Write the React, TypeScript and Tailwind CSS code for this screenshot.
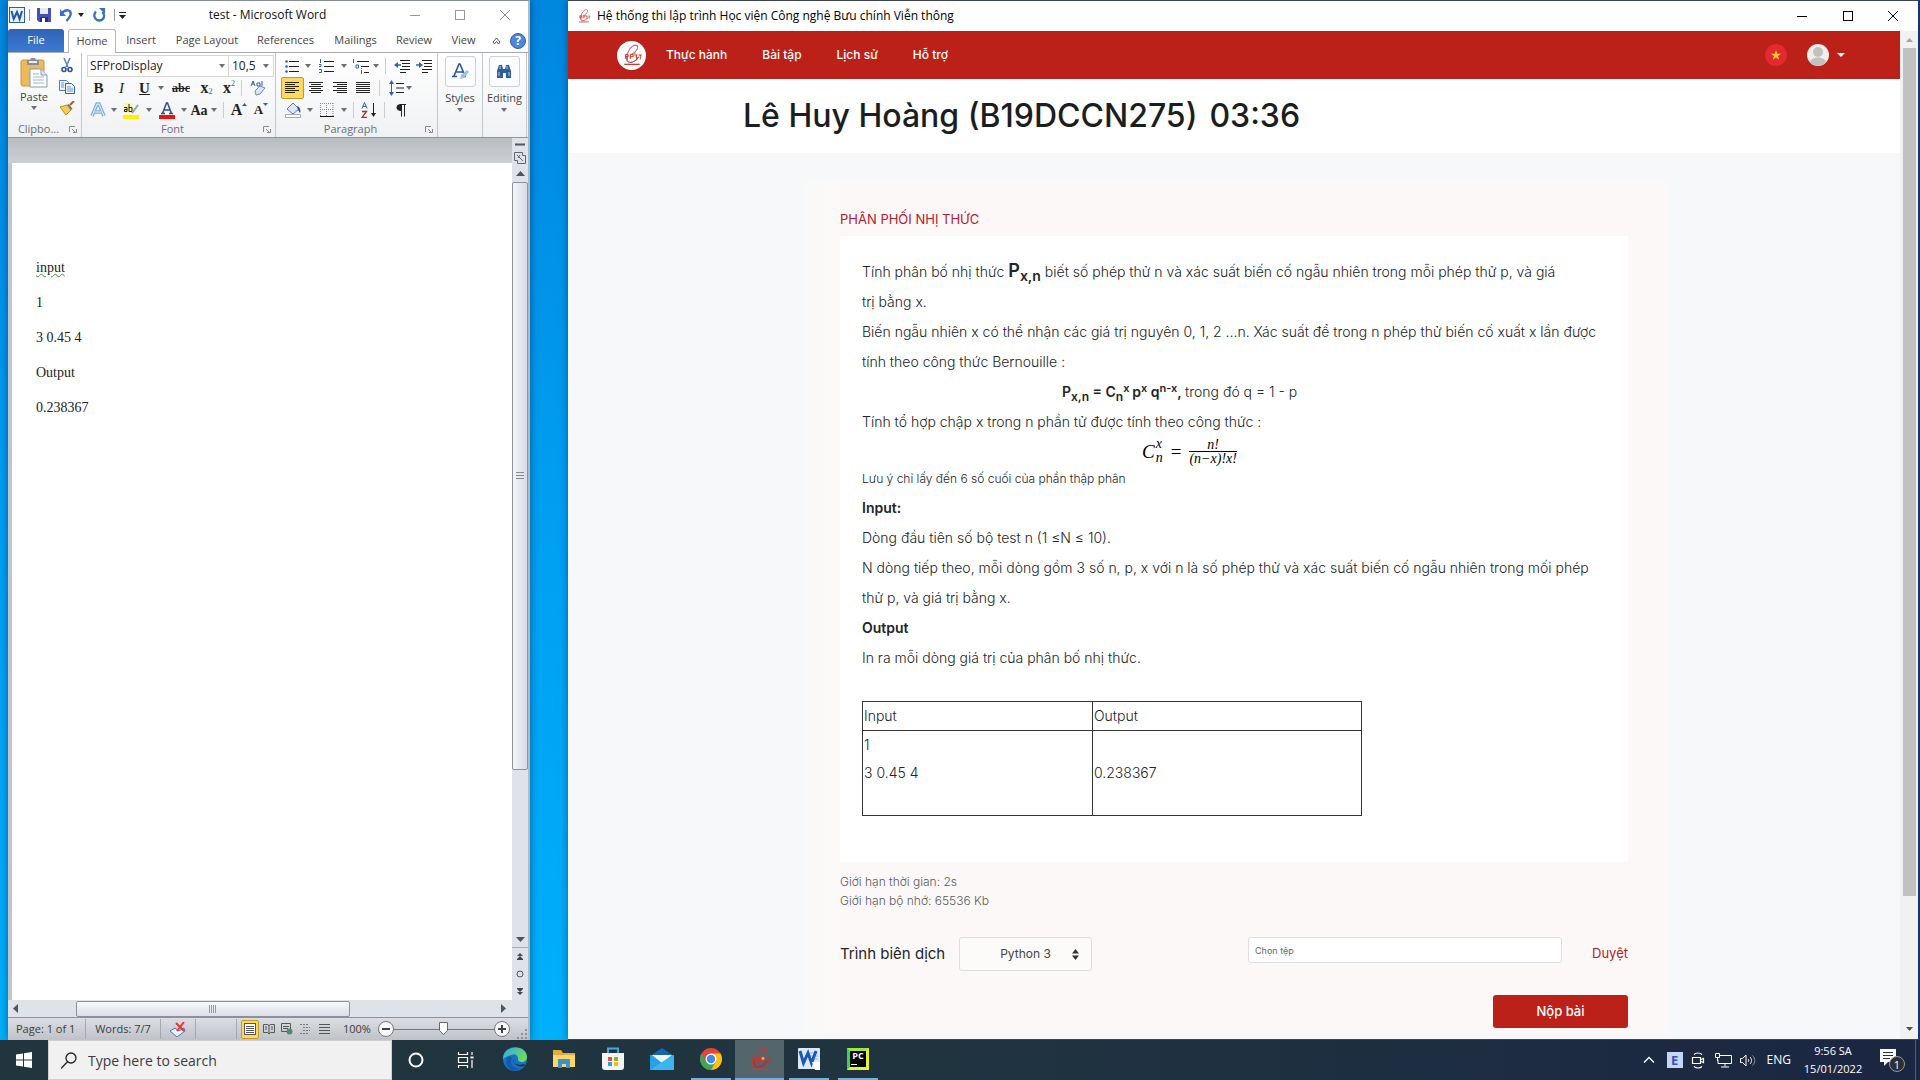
import React from "react";

type Kids = { children?: React.ReactNode };

function Svg({ w, h, children, className = "" }: { w: number; h: number; className?: string } & Kids) {
  return (
    <svg width={w} height={h} viewBox={`0 0 ${w} ${h}`} fill="none" className={`block shrink-0 ${className}`} aria-hidden="true">
      {children}
    </svg>
  );
}

function Caret({ className = "w-[10px]" }: { className?: string }) {
  return (
    <span className={`flex shrink-0 items-center justify-center ${className}`}>
      <Svg w={6} h={4}><path d="M0 0h6L3 4z" fill="#6b6f76" /></Svg>
    </span>
  );
}

function Tool({ label, w, children }: { label: string; w: string } & Kids) {
  return (
    <button aria-label={label} className={`flex h-[22px] shrink-0 items-center justify-center ${w}`}>
      {children}
    </button>
  );
}

function Sep({ className = "" }: { className?: string }) {
  return <span className={`h-[16px] w-px shrink-0 bg-[#c9ccd1] ${className}`} />;
}

function Lines({ xs, sel = false }: { xs: [number, number][]; sel?: boolean }) {
  return (
    <Svg w={15} h={13}>
      {xs.map(([a, b], i) => (
        <path key={i} d={`M${a} ${i * 2 + 0.5}H${b}`} stroke={sel ? "#2b2300" : "#222"} />
      ))}
    </Svg>
  );
}

function Logo({ size, light = false }: { size: number; light?: boolean }) {
  return (
    <svg width={size} height={size} viewBox="0 0 20 20" fill="none" aria-hidden="true" className="block shrink-0">
      <path d="M6 15C4 9 9 1 13.500 1c3.500.5 1 6-4 8.500" stroke={light ? "#b4777a" : "#c9383a"} strokeWidth="1" />
      <path d="M6 11c-2 4 0 6.500 4 5.500 3-1 5-3 6-5" stroke={light ? "#8e5a6e" : "#c22526"} strokeWidth="1" />
      <path d="M4 9.500v4M4 9.500h2.500v2H4M8.500 9.500v4M8.500 9.500H11v2H8.500M13 10h2M14 10v4M16 10h3M17.500 10v4" stroke="#d0302a" strokeWidth=".9" />
      <circle cx="12.500" cy="9.500" r="1.300" fill="#e8a33a" />
      <path d="M3 18.500h14" stroke="#cc3a38" strokeWidth="1.200" />
    </svg>
  );
}

function WordMark({ size }: { size: number }) {
  return (
    <svg width={size} height={size} viewBox="0 0 16 16" aria-hidden="true" className="block shrink-0">
      <rect x=".5" y=".5" width="15" height="15" fill="#e8f1fb" stroke="#2c5ea8" />
      <path d="M2.500 4l2.200 8L8 5l2.600 7L13 4" fill="none" stroke="#1f56a8" strokeWidth="2" />
    </svg>
  );
}

function TitleBar() {
  return (
    <div className="flex h-[28px] shrink-0 items-center">
      <div className="flex w-[135px] items-center pl-px">
        <WordMark size={16} />
        <span className="ml-1 h-3 w-px bg-[#9a9a9a]" />
        <button aria-label="Save" className="ml-[7px]">
          <Svg w={14} h={14}>
            <path d="M0 0h14v14H2l-2-2z" fill="#4a4fb8" />
            <path d="M3 0h8v6H3z" fill="#e6ebf8" /><path d="M3 9h8v5H3z" fill="#2b2f7c" /><path d="M5 10h3v4H5z" fill="#fff" />
          </Svg>
        </button>
        <button aria-label="Undo" className="ml-[9px]">
          <Svg w={13} h={14}><path d="M1.500 5.500C6 0 12 2 10.500 7c-.7 2.400-2 4-4 6" stroke="#3a6fc4" strokeWidth="2.400" /><path d="M0 1v7h6z" fill="#3a6fc4" /></Svg>
        </button>
        <span className="ml-[5px]"><Svg w={7} h={4}><path d="M0 0h6L3 4z" fill="#222" /></Svg></span>
        <button aria-label="Redo" className="ml-2">
          <Svg w={13} h={14}><path d="M3 3.500C-1 8 3 12.500 6.500 12.500S13 8 9.500 4" stroke="#3a6fc4" strokeWidth="2.300" /><path d="M6 0h6v6z" fill="#3a6fc4" /></Svg>
        </button>
        <span className="ml-2 h-3 w-px shrink-0 bg-[#9a9a9a]" />
        <button aria-label="Customize" className="ml-1"><Svg w={7} h={7}><path d="M0 .5h7" stroke="#222" /><path d="M0 3h7L3.500 7z" fill="#222" /></Svg></button>
      </div>
      <h1 className="flex-1 text-center text-[12px] text-[#111]">test - Microsoft Word</h1>
      <button aria-label="Minimize" className="flex w-[45px] justify-center"><Svg w={10} h={10}><path d="M0 5.500h10" stroke="#999" /></Svg></button>
      <button aria-label="Maximize" className="flex w-[45px] justify-center"><Svg w={10} h={10}><rect x=".5" y=".5" width="9" height="9" stroke="#999" /></Svg></button>
      <button aria-label="Close" className="flex w-[46px] justify-center"><Svg w={10} h={10}><path d="M0 0l10 10M10 0L0 10" stroke="#888" /></Svg></button>
    </div>
  );
}

function Tabs() {
  const tabs: [string, string][] = [
    ["Insert", "w-[50px]"], ["Page Layout", "w-[82px]"], ["References", "w-[75px]"],
    ["Mailings", "w-[65px]"], ["Review", "w-[52px]"], ["View", "w-[47px]"],
  ];
  return (
    <nav className="flex h-6 shrink-0 items-end border-b border-[#a9adb3] text-[11px] text-[#444]">
      <button className="h-[23px] w-14 shrink-0 rounded-t-[3px] bg-gradient-to-b from-[#2f62b5] to-[#3b7bd4] text-white">File</button>
      <button className="-mb-px ml-1 h-[24px] w-12 shrink-0 rounded-t-[3px] border border-b-0 border-[#b4b7bc] bg-white">Home</button>
      {tabs.map(([t, w]) => <button key={t} className={`h-[23px] shrink-0 whitespace-nowrap ${w}`}>{t}</button>)}
      <div className="flex h-[23px] flex-1 items-center justify-end gap-[9px] pr-[2px]">
        <button aria-label="Minimize the ribbon"><Svg w={9} h={8}><path d="M1 5l3.500-4L8 5l-1.500 2-2-2.500L2.500 7z" stroke="#555" /></Svg></button>
        <button aria-label="Help" className="flex h-4 w-4 items-center justify-center rounded-full border border-[#2f5fae] bg-[#4b86dc] text-[12px] font-bold leading-none text-white">?</button>
      </div>
    </nav>
  );
}

function GroupLabel({ text, launch = true }: { text: string; launch?: boolean }) {
  return (
    <div className="mt-auto flex h-4 items-center text-[11px] text-[#6a6f78]">
      <span className="flex-1 text-center">{text}</span>
      {launch && (
        <button aria-label={`${text} options`} className="w-[12px]">
          <Svg w={8} h={7}><path d="M.5 6V.5H6M3 3l4 4M7.500 3v3.500H4" stroke="#888" /></Svg>
        </button>
      )}
    </div>
  );
}

function BigGroup({ text, w, icon }: { text: string; w: string; icon: React.ReactNode }) {
  return (
    <section className={`flex shrink-0 flex-col items-center border-r border-[#c3c6cb] pt-[3px] text-[11px] text-[#444] ${w}`}>
      <button className="flex flex-col items-center">
        <span className="flex h-[31px] w-[31px] items-center justify-center rounded-[3px] border border-[#cdd0d6] bg-[#fbfcfd]">{icon}</span>
        <span className="mt-[3px] leading-4">{text}</span>
        <span className="mt-[2px]"><Caret /></span>
      </button>
    </section>
  );
}

function Ribbon() {
  const serif = "font-['Liberation_Serif',serif]";
  return (
    <div className="flex h-[85px] shrink-0 border-b border-[#8f949c] bg-gradient-to-b from-white to-[#f0f1f3]">
      <section className="flex w-[74px] shrink-0 flex-col border-r border-[#c3c6cb]">
        <div className="flex pt-[5px]">
          <button className="flex w-[52px] flex-col items-center text-[11px] text-[#444]">
            <Svg w={28} h={30}>
              <rect x="1" y="2" width="23" height="26" rx="2" fill="#ecb95c" stroke="#c9943a" />
              <path d="M7 2h3l1-2h4l1 2h3v5H7z" fill="#8a8d92" /><path d="M9 3h8v2H9z" fill="#e9eaec" />
              <path d="M10 11h11l6 6v12H10z" fill="#fff" stroke="#8699b8" /><path d="M21 11v6h6" fill="#dfe8f4" stroke="#8699b8" />
              <path d="M13 16h6M13 19h11M13 22h11M13 25h11" stroke="#9fb2cf" />
            </Svg>
            <span className="leading-[18px]">Paste</span>
            <Caret />
          </button>
          <div className="flex w-[14px] flex-col items-center gap-[3px]">
            <button aria-label="Cut"><Svg w={12} h={15}><path d="M3 0l4 9M9 0L5 9" stroke="#5c82b8" strokeWidth="1.500" /><circle cx="3" cy="11.500" r="2" stroke="#2752a0" strokeWidth="1.600" /><circle cx="9" cy="11.500" r="2" stroke="#2752a0" strokeWidth="1.600" /></Svg></button>
            <button aria-label="Copy" className="mt-1"><Svg w={16} h={14}><path d="M.5.500h7l2 2v8h-9z" fill="#eef4fc" stroke="#4f7dc0" /><path d="M6.500 3.500h6l3 3v7h-9z" fill="#eef4fc" stroke="#2f62b5" /><path d="M8 7h4M8 9h6M8 11h6M2 3h3M2 5h3M2 7h3" stroke="#6e95cc" /></Svg></button>
            <button aria-label="Format painter" className="mt-1"><Svg w={16} h={15}><path d="M1 6l7-2 4 5-5 5z" fill="#f0cf58" stroke="#b99220" /><path d="M8 4l4 5 1.500-1L10 3z" fill="#777" /><path d="M11 4l4-4" stroke="#a05f2a" strokeWidth="2" /></Svg></button>
          </div>
        </div>
        <GroupLabel text="Clipbo..." />
      </section>

      <section className="flex w-[194px] shrink-0 flex-col border-r border-[#c3c6cb]">
        <div className="flex flex-col pl-[5px] pt-[2px]">
          <div className="flex h-[22px] w-[187px] border border-[#d4d6da] bg-white text-[12px] text-[#222]">
            <input aria-label="Font" defaultValue="SFProDisplay" className="w-[127px] pl-[2px] outline-none" />
            <Caret className="w-[14px] border-r border-[#d4d6da]" />
            <input aria-label="Font size" defaultValue="10,5" className="w-[30px] pl-[3px] outline-none" />
            <Caret className="w-[14px]" />
          </div>
          <div className={`flex h-[22px] items-center text-[15px] text-[#222] ${serif}`}>
            <Tool label="Bold" w="w-[23px]"><b>B</b></Tool>
            <Tool label="Italic" w="w-[23px]"><i>I</i></Tool>
            <Tool label="Underline" w="w-[23px]"><span className="font-bold underline">U</span></Tool>
            <Caret />
            <Tool label="Strikethrough" w="w-[30px]"><span className="text-[12px] font-bold line-through">abc</span></Tool>
            <Tool label="Subscript" w="w-[21px]"><b className="text-[16px]">x</b><span className="mt-2 text-[8px] text-[#2f62b5]">2</span></Tool>
            <Tool label="Superscript" w="w-[24px]"><b className="text-[16px]">x</b><span className="mb-2 text-[8px] text-[#2f62b5]">2</span></Tool>
            <Sep />
            <Tool label="Clear formatting" w="w-[31px]">
              <Svg w={16} h={16}><path d="M1 6l2-5 2 5M2 4h2M7 3h3v3H7zM12 1v5" stroke="#2f5fa8" /><path d="M5 11l5-5 5 2-5 6-4 1z" fill="#dbe6f5" stroke="#7088b0" /></Svg>
            </Tool>
          </div>
          <div className={`flex h-[22px] items-center text-[15px] text-[#222] ${serif}`}>
            <Tool label="Text effects" w="w-[22px]"><Svg w={16} h={16}><path d="M2 14L7 2h2l5 12M4.500 10h7" stroke="#7fb0e0" strokeWidth="3.500" /><path d="M2 14L7 2h2l5 12M4.500 10h7" stroke="#e6f1fb" /></Svg></Tool>
            <Caret />
            <Tool label="Highlight" w="w-[25px]"><Svg w={17} h={17}><path d="M0 13h16v4H0z" fill="#ffee00" /><path d="M0 1h10v10H0z" fill="#fdf7a0" /><path d="M1 5.500h3v4H1.500v-2H4M6 2v7.500h3v-4H6" stroke="#222" /><path d="M9 11l6-8" stroke="#8fa3c4" strokeWidth="2" /></Svg></Tool>
            <Caret />
            <Tool label="Font color" w="w-[25px]"><Svg w={16} h={17}><path d="M0 13h16v4H0z" fill="#ee1111" /><path d="M3.500 11.500L7.500 1h1l4 10.500M5 8h6M2 11.500h4M10 11.500h4" stroke="#2f4f8c" strokeWidth="1.500" /></Svg></Tool>
            <Caret />
            <Tool label="Change case" w="w-[20px]"><b className="text-[14px]">Aa</b></Tool>
            <Caret />
            <Sep className="ml-[4px]" />
            <Tool label="Grow font" w="w-[30px]"><b className="text-[16px]">A</b><Svg w={5} h={14}><path d="M0 3h5L2.500 0z" fill="#2f62b5" /></Svg></Tool>
            <Tool label="Shrink font" w="w-[14px]"><b className="text-[13px]">A</b><Svg w={5} h={14}><path d="M0 0h5L2.500 3z" fill="#2f62b5" /></Svg></Tool>
          </div>
        </div>
        <GroupLabel text="Font" />
      </section>

      <section className="flex w-[162px] shrink-0 flex-col border-r border-[#c3c6cb]">
        <div className="flex flex-col pl-[5px] pt-[2px]">
          <div className="flex h-[22px] items-center">
            <Tool label="Bullets" w="w-[22px]"><Svg w={14} h={13}><path d="M4 1.500h10M4 6.500h10M4 11.500h10" stroke="#222" /><circle cx="1.500" cy="1.500" r="1.300" fill="#2f62b5" /><circle cx="1.500" cy="6.500" r="1.300" fill="#2f62b5" /><circle cx="1.500" cy="11.500" r="1.300" fill="#2f62b5" /></Svg></Tool>
            <Caret />
            <Tool label="Numbering" w="w-[26px]"><Svg w={15} h={14}><path d="M5 2.500h10M5 7.500h10M5 12.500h10" stroke="#222" /><path d="M1.500 0v4M0 5.500h2v2H0M0 10.500h2.500v3H0" stroke="#2f62b5" /></Svg></Tool>
            <Caret />
            <Tool label="Multilevel list" w="w-[22px]"><Svg w={17} h={15}><path d="M5 2.500h12M9 7.500h8M12 13.500h5" stroke="#222" /><path d="M1.500 0v4M4 6h2.500v3H4zM9.500 11v4M9.500 9v1" stroke="#2f62b5" /></Svg></Tool>
            <Caret />
            <Sep className="ml-1" />
            <Tool label="Decrease indent" w="w-[31px]"><Svg w={16} h={14}><path d="M6 1.500h10M8 4.500h8M8 7.500h8M6 10.500h10M6 13.500h6" stroke="#222" /><path d="M7 6H2" stroke="#2f62b5" strokeWidth="1.500" /><path d="M0 6l4-3v6z" fill="#2f62b5" /></Svg></Tool>
            <Tool label="Increase indent" w="w-[14px]"><Svg w={16} h={14}><path d="M6 1.500h10M8 4.500h8M8 7.500h8M6 10.500h10M6 13.500h6" stroke="#222" /><path d="M0 6h4" stroke="#2f62b5" strokeWidth="1.500" /><path d="M7 6L3 3v6z" fill="#2f62b5" /></Svg></Tool>
          </div>
          <div className="flex h-[22px] items-center">
            <button aria-label="Align left" className="flex h-[22px] w-[23px] items-center justify-center rounded-[2px] border border-[#c29b29] bg-[#fbd964]">
              <Lines sel xs={[[0, 14], [0, 10], [0, 14], [0, 10], [0, 14], [0, 10]]} />
            </button>
            <Tool label="Center" w="w-[24px]"><Lines xs={[[0, 14], [2, 12], [0, 14], [2, 12], [0, 14], [2, 12]]} /></Tool>
            <Tool label="Align right" w="w-[24px]"><Lines xs={[[0, 14], [4, 14], [0, 14], [4, 14], [0, 14], [4, 14]]} /></Tool>
            <Tool label="Justify" w="w-[23px]"><Lines xs={[[0, 14], [0, 14], [0, 14], [0, 14], [0, 14], [0, 14]]} /></Tool>
            <Sep className="ml-1" />
            <Tool label="Line spacing" w="w-[32px]"><Svg w={15} h={16}><path d="M7 3.500h8M7 8h8M7 12.500h8" stroke="#222" /><path d="M2.500 3v10" stroke="#2f62b5" /><path d="M0 4l2.500-4L5 4zM0 12l2.500 4L5 12z" fill="#2f62b5" /></Svg></Tool>
            <span className="-ml-2"><Caret /></span>
          </div>
          <div className="flex h-[22px] items-center">
            <Tool label="Shading" w="w-[24px]"><Svg w={17} h={16}><path d="M2 7l6-6 6 6-6 5z" fill="#dfe7f3" stroke="#5b76a8" /><path d="M12 4c3 1 4 4 3 7l-2-3z" fill="#2f4f9c" /><path d="M.5 12.500h15v3H.500z" fill="#fff" stroke="#9aa9c0" /></Svg></Tool>
            <Caret />
            <Tool label="Borders" w="w-[24px]"><Svg w={14} h={14}><path d="M.5 0v13M6.500 0v13M13 0v13M0 .5h14M0 6.500h14" stroke="#888" strokeDasharray="1 1" /><path d="M0 13.500h14" stroke="#111" /></Svg></Tool>
            <Caret />
            <Sep className="ml-1" />
            <Tool label="Sort" w="w-[30px]"><Svg w={16} h={16}><path d="M1 6.500L3.500.500 6 6.500M2 4.500h3" stroke="#2f62b5" /><path d="M1 9.500h4.500L1 15.500h5" stroke="#a8322c" strokeWidth="1.300" /><path d="M12.500 1v12" stroke="#222" /><path d="M10 11h5l-2.500 4z" fill="#222" /></Svg></Tool>
            <Sep />
            <Tool label="Show marks" w="w-[32px]"><Svg w={10} h={13}><path d="M5.500 0v12.500M8.500 0v12.500M4 .5h6" stroke="#222" /><path d="M5 0C-1 0-1 7 5 7z" fill="#222" /></Svg></Tool>
          </div>
        </div>
        <GroupLabel text="Paragraph" />
      </section>

      <BigGroup text="Styles" w="w-[45px]" icon={<Svg w={17} h={17}><path d="M2 13L7 1h1l5 12M4 9h7M0 13.500h5M9 13.500h5" stroke="#2c5596" strokeWidth="1.600" /><path d="M9 12l6-5 2 2-5 6-4 1z" fill="#9fc0e4" /></Svg>} />
      <BigGroup text="Editing" w="w-[44px]" icon={<Svg w={16} h={16}><path d="M1 7l2-6h3l1 4h2l1-4h3l2 6v7h-5V9H7v5H1z" fill="#2f5c9e" /><path d="M3 8v4M13 8v4M4 2v3M11 2v3" stroke="#b7cde9" /></Svg>} />
    </div>
  );
}

function WordStatus() {
  const sep = <span className="h-5 w-px shrink-0 bg-[#a5a8ae]" />;
  return (
    <footer className="flex h-[23px] shrink-0 items-center border-t border-[#8e9198] bg-gradient-to-b from-[#dcdee2] to-[#bfc2c8] text-[11px] text-[#3a3d42]">
      <span className="w-[77px] pl-2">Page: 1 of 1</span>{sep}
      <span className="w-[74px] text-center">Words: 7/7</span>{sep}
      <button aria-label="Proofing" className="flex w-[34px] justify-center"><Svg w={18} h={15}><path d="M1 9l5-3 4 3 5-3 1 3-8 6z" fill="#eaf1fb" stroke="#4e78b5" /><path d="M7 1l8 8M15 0L8 9" stroke="#e23b2e" strokeWidth="2" /></Svg></button>{sep}
      <span className="flex-1" />{sep}
      <button aria-label="Print layout" className="ml-1 flex h-[19px] w-[18px] items-center justify-center rounded-[2px] border border-[#c29b29] bg-[#fbd964]"><Svg w={12} h={12}><rect x=".5" y=".5" width="11" height="11" fill="#fff" stroke="#555" /><path d="M2 3.500h8M2 5.500h8M2 7.500h8M2 9.500h8" stroke="#555" /></Svg></button>
      <button aria-label="Reading view" className="ml-1"><Svg w={12} h={12}><path d="M.5 1.500h4l1.500 1 1.500-1h4v8h-4L6 11 4.500 9.500h-4zM6 2v9M2 4h2M2 6h2M8 4h2M8 6h2" stroke="#555" /></Svg></button>
      <button aria-label="Web layout" className="ml-[6px]"><Svg w={12} h={12}><path d="M.5.500h9v8h-9zM2 3.500h6M2 5.500h5" stroke="#555" /><circle cx="8.500" cy="8.500" r="3" fill="#4c8a72" /></Svg></button>
      <button aria-label="Outline" className="ml-[7px]"><Svg w={11} h={12}><path d="M0 1.500h8M3 4.500h7M3 7.500h7M0 10.500h8" stroke="#777" strokeDasharray="2 1" /></Svg></button>
      <button aria-label="Draft" className="ml-2"><Svg w={11} h={12}><path d="M0 1.500h11M0 4.500h11M0 7.500h11M0 10.500h11" stroke="#555" /></Svg></button>
      <span className="ml-[13px] w-[28px]">100%</span>
      <button aria-label="Zoom out" className="ml-[7px]"><Svg w={16} h={16}><circle cx="8" cy="8" r="7.500" fill="#f6f7f8" stroke="#777" /><path d="M4 8h8" stroke="#444" strokeWidth="2" /></Svg></button>
      <Svg w={100} h={14}><path d="M0 7.500h100" stroke="#777" /><path d="M45.500.500h8v8l-4 4-4-4z" fill="#fff" stroke="#666" /></Svg>
      <button aria-label="Zoom in"><Svg w={16} h={16}><circle cx="8" cy="8" r="7.500" fill="#f6f7f8" stroke="#777" /><path d="M4 8h8M8 4v8" stroke="#444" strokeWidth="2" /></Svg></button>
      <Svg w={12} h={14} className="ml-[6px] self-end"><path d="M9 3h2v2H9zM9 7h2v2H9zM5 7h2v2H5zM9 11h2v2H9zM5 11h2v2H5zM1 11h2v2H1z" fill="#8d9096" /></Svg>
    </footer>
  );
}

function WordWindow() {
  return (
    <section className="flex w-[522px] shrink-0 flex-col border-r-2 border-t border-[#868d94] border-r-[#b4bac0] bg-white font-['Open_Sans',sans-serif] shadow-[0_0_8px_rgba(0,0,60,0.45)]">
      <TitleBar />
      <Tabs />
      <Ribbon />
      <div className="flex min-h-0 flex-1">
        <div className="flex min-w-0 flex-1 flex-col">
          <div className="h-[25px] shrink-0 bg-gradient-to-b from-[#b9bdc2] to-[#cbcfd4]" />
          <div className="flex-1 border-l-4 border-[#c0c5cb] bg-white pl-6 pt-[87px] font-['Liberation_Serif',serif] text-[14px] leading-[35px] text-[#222]">
            <p><span className="underline decoration-[#3f9a3f] decoration-wavy decoration-1">input</span></p>
            <p>1</p><p>3 0.45 4</p><p>Output</p><p>0.238367</p>
          </div>
        </div>
        <div className="flex w-4 shrink-0 flex-col items-center bg-[#dfe2e8] text-[#50545b]">
          <Svg w={10} h={8} className="mt-1"><path d="M0 2.500h10" stroke="#50545b" strokeWidth="2" /></Svg>
          <button aria-label="View ruler" className="mt-[2px]"><Svg w={12} h={12}><path d="M.5.500h8v3h3v8h-8v-3h-3zM3 3l6 6M6 3l-2 3" stroke="#666" /></Svg></button>
          <button aria-label="Scroll up" className="flex h-[18px] w-full items-center justify-center"><Svg w={9} h={5}><path d="M0 5h9L4.500 0z" fill="#50545b" /></Svg></button>
          <div className="flex h-[588px] w-full items-center justify-center rounded-[2px] border border-[#8e9199] bg-gradient-to-r from-[#f4f5f9] to-[#d8dbe6]">
            <Svg w={8} h={8}><path d="M0 .5h8M0 3.500h8M0 6.500h8" stroke="#888" /></Svg>
          </div>
          <div className="flex-1" />
          <button aria-label="Scroll down" className="mb-[5px]"><Svg w={9} h={5}><path d="M0 0h9L4.500 5z" fill="#50545b" /></Svg></button>
          <div className="flex h-[53px] w-full flex-col items-center justify-around border-t border-[#aaa]">
            <button aria-label="Previous page"><Svg w={6} h={7}><path d="M0 3h6L3 0zM0 6h6L3 3zM0 6h6v1H0z" fill="#444" /></Svg></button>
            <button aria-label="Browse object"><Svg w={8} h={8}><circle cx="4" cy="4" r="3" stroke="#555" /></Svg></button>
            <button aria-label="Next page"><Svg w={6} h={7}><path d="M0 1h6L3 4zM0 4h6L3 7zM0 0h6v1H0z" fill="#444" /></Svg></button>
          </div>
        </div>
      </div>
      <div className="flex h-[17px] shrink-0 items-center bg-[#dfe2e8]">
        <button aria-label="Scroll left" className="ml-[5px]"><Svg w={5} h={9}><path d="M5 0v9L0 4.500z" fill="#50545b" /></Svg></button>
        <div className="ml-[58px] flex h-4 w-[274px] items-center justify-center rounded-[2px] border border-[#8e9199] bg-gradient-to-b from-[#f7f8fb] to-[#dcdfe8]">
          <Svg w={8} h={8}><path d="M.5 0v8M2.500 0v8M4.500 0v8M6.500 0v8" stroke="#999" /></Svg>
        </div>
        <span className="flex-1" />
        <button aria-label="Scroll right" className="mr-[22px]"><Svg w={5} h={9}><path d="M0 0v9l5-4.500z" fill="#50545b" /></Svg></button>
      </div>
      <WordStatus />
    </section>
  );
}

function Problem() {
  const sub = "relative top-[4px] text-[12px] leading-none";
  const sup = "relative -top-[5px] text-[11px] leading-none";
  return (
    <article className="mt-[5px] bg-white px-[22px] pb-[46px] pt-[21px] text-[14px] font-light leading-[30px] text-[#212529]">
      <p className="h-[60px] whitespace-nowrap">
        Tính phân bố nhị thức <b className="text-[18px] font-semibold leading-none">P<span className="relative top-[4px] text-[14px] leading-none">x,n</span></b> biết số phép thử n và xác suất biến cố ngẫu nhiên trong mỗi phép thử p, và giá<br />trị bằng x.
      </p>
      <p className="whitespace-nowrap">
        Biến ngẫu nhiên x có thể nhận các giá trị nguyên 0, 1, 2 ...n. Xác suất để trong n phép thử biến cố xuất x lần được<br />tính theo công thức Bernouille :
      </p>
      <p className="h-[30px] pl-[200px]">
        <b className="font-semibold">P<span className={sub}>x,n</span> = C<span className={sub}>n</span><span className={sup}>x </span>p<span className={sup}>x</span> q<span className={sup}>n-x</span>, </b>trong đó q = 1 - p
      </p>
      <p>Tính tổ hợp chập x trong n phần tử được tính theo công thức :</p>
      <div className="flex h-[28px] items-center pl-[280px] font-['Liberation_Serif',serif] text-[19px] font-normal italic leading-none text-black">
        <span>C</span>
        <span className="ml-px flex flex-col text-[14px] leading-[14px]"><span>x</span><span>n</span></span>
        <span className="ml-2 not-italic">=</span>
        <span className="ml-2 flex flex-col items-center text-[14px] leading-[13px]">
          <span className="w-full border-b border-black text-center">n!</span>
          <span>(n−x)!x!</span>
        </span>
      </div>
      <p className="text-[12px] leading-7">Lưu ý chỉ lấy đến 6 số cuối của phần thập phân</p>
      <h3 className="font-semibold">Input:</h3>
      <p>Dòng đầu tiên số bộ test n (1 ≤N ≤ 10).</p>
      <p className="whitespace-nowrap">
        N dòng tiếp theo, mỗi dòng gồm 3 số n, p, x với n là số phép thử và xác suất biến cố ngẫu nhiên trong mối phép<br />thử p, và giá trị bằng x.
      </p>
      <h3 className="font-semibold">Output</h3>
      <p>In ra mỗi dòng giá trị của phân bố nhị thức.</p>
      <table className="mt-[28px] w-[500px] border-collapse border border-[#111] text-left text-[14px] leading-7">
        <thead>
          <tr><th className="w-[230px] border border-[#333] px-px font-light">Input</th><th className="border border-[#333] px-px font-light">Output</th></tr>
        </thead>
        <tbody>
          <tr><td className="border border-[#333] px-px pb-7">1<br />3 0.45 4</td><td className="border border-[#333] px-px">0.238367</td></tr>
        </tbody>
      </table>
    </article>
  );
}

function BrowserWindow() {
  return (
    <section className="flex min-w-0 flex-1 flex-col border-b border-t border-[#3a4456] bg-white font-['Inter',sans-serif] shadow-[0_0_8px_rgba(0,0,60,0.4)]">
      <div className="flex h-[30px] shrink-0 items-center pl-[9px] pr-[2px] font-['Open_Sans',sans-serif]">
        <Logo size={14} />
        <span className="ml-[6px] flex-1 text-[12px] text-black">Hệ thống thi lập trình Học viện Công nghệ Bưu chính Viễn thông</span>
        <button aria-label="Minimize" className="flex w-[46px] justify-center"><Svg w={10} h={10}><path d="M0 5.500h10" stroke="#000" /></Svg></button>
        <button aria-label="Maximize" className="flex w-[45px] justify-center"><Svg w={10} h={10}><rect x=".5" y=".5" width="9" height="9" stroke="#000" /></Svg></button>
        <button aria-label="Close" className="flex w-[46px] justify-center"><Svg w={10} h={10}><path d="M0 0l10 10M10 0L0 10" stroke="#000" /></Svg></button>
      </div>
      <div className="flex min-h-0 flex-1">
        <div className="flex min-w-0 flex-1 flex-col overflow-hidden bg-[#f6f8fa]">
          <header className="flex h-12 shrink-0 items-center bg-[#bb2119] pl-[49px] pr-[55px] text-[12px] font-medium text-white">
            <a href="#home" aria-label="Home" className="flex h-[29px] w-[29px] items-center justify-center rounded-full bg-white"><Logo size={22} light /></a>
            <nav className="ml-5 flex flex-1 gap-[35px]">
              <a href="#practice">Thực hành</a><a href="#exercises">Bài tập</a><a href="#history">Lịch sử</a><a href="#support">Hỗ trợ</a>
            </nav>
            <button aria-label="Language"><Svg w={22} h={22}><circle cx="11" cy="11" r="11" fill="#e22a30" /><path d="M11 6l1.300 3.700h3.800l-3.100 2.300 1.200 3.700L11 13.400l-3.200 2.300L9 12 5.900 9.700h3.800z" fill="#fccb2f" /></Svg></button>
            <button aria-label="Account" className="ml-5 flex items-center gap-2">
              <Svg w={22} h={22}><circle cx="11" cy="11" r="11" fill="#eeeeec" /><circle cx="11" cy="8" r="5" fill="#c2c1be" /><path d="M3 18c2-6 14-6 16 0-4 5-12 5-16 0z" fill="#c2c1be" /></Svg>
              <Svg w={8} h={4}><path d="M0 0h8L4 4z" fill="#fff" /></Svg>
            </button>
          </header>
          <div className="flex h-[74px] shrink-0 items-center bg-white pl-[175px] text-[32px] font-medium text-[#1b1e21]">
            <h2>Lê Huy Hoàng (B19DCCN275)</h2><span className="ml-3">03:36</span>
          </div>
          <main className="ml-[237px] mt-7 w-[862px] shrink-0 rounded bg-gradient-to-r from-[#f9f9f8] via-[#fdf8f8] via-5% to-[#fdf8f8] pb-[5px] pl-[35px] pr-[39px] pt-[26px]">
            <h2 className="text-[13px] leading-6 text-[#b3202b]">PHÂN PHỐI NHỊ THỨC</h2>
            <Problem />
            <div className="mt-[10px] text-[12px] font-light leading-[19px] text-[#55585e]">
              <p>Giới hạn thời gian: 2s</p><p>Giới hạn bộ nhớ: 65536 Kb</p>
            </div>
            <form className="mt-[27px]" onSubmit={(e) => e.preventDefault()}>
              <div className="flex items-start">
                <label htmlFor="compiler" className="w-[119px] whitespace-nowrap text-[15px] leading-[34px] text-[#212529]">Trình biên dịch</label>
                <div className="relative">
                  <select id="compiler" className="h-[34px] w-[133px] appearance-none rounded-[3px] border border-[#dcdfe2] bg-[#fdfafa] text-center text-[12px] text-[#444]" defaultValue="py">
                    <option value="py">Python 3</option>
                  </select>
                  <Svg w={7} h={11} className="pointer-events-none absolute right-[13px] top-[12px]"><path d="M0 4.500h7L3.500 0zM0 6.500h7L3.500 11z" fill="#333" /></Svg>
                </div>
                <span className="flex-1" />
                <input aria-label="Chọn tệp" placeholder="Chọn tệp" className="h-[26px] w-[314px] rounded-[3px] border border-[#dcdfe2] bg-white px-[6px] text-[9px] placeholder:text-[#666]" />
                <button type="button" className="ml-[30px] text-[13px] leading-8 text-[#b3202b]">Duyệt</button>
              </div>
              <div className="mt-6 flex justify-end">
                <button className="h-[33px] w-[135px] rounded-[3px] bg-[#bb2119] text-[13px] font-medium text-white">Nộp bài</button>
              </div>
            </form>
          </main>
        </div>
        <div className="flex w-[18px] shrink-0 flex-col items-center bg-[#f1f1f1]">
          <button aria-label="Scroll up" className="flex h-[17px] items-center"><Svg w={7} h={4}><path d="M0 4h7L3.500 0z" fill="#a3a3a3" /></Svg></button>
          <div className="h-[848px] w-[13px] bg-[#c1c1c1]" />
          <span className="flex-1" />
          <button aria-label="Scroll down" className="mb-2"><Svg w={7} h={4}><path d="M0 0h7L3.500 4z" fill="#505050" /></Svg></button>
        </div>
      </div>
    </section>
  );
}

function TaskButton({ label, open = false, active = false, children }: { label: string; open?: boolean; active?: boolean } & Kids) {
  return (
    <button aria-label={label} className={`flex h-10 w-[49px] flex-col items-center ${active ? "bg-[#55656c]" : ""}`}>
      <span className="flex flex-1 items-center">{children}</span>
      <span className={`h-[2px] ${active ? "w-full" : "w-10"} ${open ? "bg-[#76b0e0]" : ""}`} />
    </button>
  );
}

function Taskbar() {
  return (
    <footer className="flex h-10 shrink-0 items-center bg-gradient-to-r from-[#20353e] via-[#203440] to-[#1b2642] font-['Open_Sans',sans-serif] text-white">
      <button aria-label="Start" className="flex w-12 justify-center"><Svg w={16} h={16}><path d="M0 2.500l7-1v6H0zM8 1.300L16 0v7.500H8zM0 8.500h7v6l-7-1zM8 8.500h8V16l-8-1.300z" fill="#fff" /></Svg></button>
      <label className="flex h-10 w-[344px] items-center border border-[#cfcfcf] bg-[#f1f1f1] pl-3 text-[#333]">
        <Svg w={16} h={17}><circle cx="10" cy="6" r="5" stroke="#222" strokeWidth="1.300" /><path d="M6.500 9.800L0 16.500" stroke="#222" strokeWidth="1.300" /></Svg>
        <input aria-label="Search" placeholder="Type here to search" className="ml-[11px] flex-1 bg-transparent text-[14px] outline-none placeholder:text-[#3c3c3c]" />
      </label>
      <button aria-label="Cortana" className="flex w-12 justify-center"><Svg w={16} h={16}><circle cx="8" cy="8" r="6.500" stroke="#fff" strokeWidth="2" /></Svg></button>
      <button aria-label="Task view" className="flex w-[50px] justify-center"><Svg w={17} h={16}><path d="M1.500 0v2.500h9V0M1.500 5.500h9v5h-9zM1.500 16v-2.500h9V16M15 0v3M15 8v8" stroke="#fff" strokeWidth="1.200" /><path d="M13.500 4.500h3v2h-3z" fill="#fff" /></Svg></button>
      <TaskButton label="Edge">
        <Svg w={24} h={24}>
          <defs><linearGradient id="eg" x1="0" y1="0" x2="1" y2=".6"><stop offset="0" stopColor="#2fa8e6" /><stop offset="1" stopColor="#6fdc5c" /></linearGradient></defs>
          <circle cx="12" cy="12" r="12" fill="#1672c8" />
          <path d="M0 12C0-3 24-3 24 10c0 6-8 6-9 3 1-4-3-7-7-5-4 1-7 3-8 4z" fill="url(#eg)" />
          <path d="M9 11c-3 5 1 11 8 11-9 4-16-3-13-11 2-2 4-2 5 0z" fill="#135aa8" />
          <path d="M10 12c-1 4 4 7 11 5l1 1c-3 3-11 2-12-6z" fill="#20353e" />
        </Svg>
      </TaskButton>
      <TaskButton label="File Explorer"><Svg w={22} h={20}><path d="M0 1h8l2 3h12v14H0z" fill="#e5a93c" /><path d="M0 6h22v12H0z" fill="#fcd76a" /><path d="M5 10h12v9h-4v-4H9v4H5z" fill="#3f92d2" /></Svg></TaskButton>
      <TaskButton label="Store"><Svg w={24} h={24}><path d="M7 7V1.500h10V7" stroke="#46a9df" strokeWidth="2" /><path d="M1 6h22v14a3 3 0 01-3 3H4a3 3 0 01-3-3z" fill="#f4f4f4" /><path d="M7 10h4v4H7z" fill="#e8502c" /><path d="M13 10h4v4h-4z" fill="#7fb62c" /><path d="M7 15h4v4H7z" fill="#25a2e6" /><path d="M13 15h4v4h-4z" fill="#fdb813" /></Svg></TaskButton>
      <TaskButton label="Mail"><Svg w={24} h={22}><path d="M0 8l12-8 12 8z" fill="#1066b4" /><path d="M0 7h24v15H0z" fill="#2aa0e4" /><path d="M2 7h20l-10 8z" fill="#f3f6f9" /><path d="M0 22L15 12l9-5v15z" fill="#3cb4f0" /></Svg></TaskButton>
      <TaskButton label="Chrome" open><Svg w={22} h={22}><circle cx="11" cy="11" r="11" fill="#e24436" /><path d="M1.500 5.500A11 11 0 0011 22l5-8.500H6z" fill="#3aa757" /><path d="M11 22a11 11 0 009.500-16.500H11l5 8z" fill="#fbc116" /><circle cx="11" cy="11" r="5.500" fill="#fff" /><circle cx="11" cy="11" r="4.200" fill="#4688f1" /></Svg></TaskButton>
      <TaskButton label="Exam browser" open active><Logo size={24} /></TaskButton>
      <TaskButton label="Word" open><Svg w={22} h={22}><rect width="22" height="21" rx="1" fill="#dce9f8" /><path d="M12 5h8M12 8h8M12 11h8" stroke="#9bb8dd" /><path d="M2 3l3.500 12L10 5l3.500 10L18 3" stroke="#1c57b4" strokeWidth="3" /><path d="M14 14h8v8h-5z" fill="#fff" /></Svg></TaskButton>
      <TaskButton label="PyCharm" open><span className="flex h-[22px] w-[22px] flex-col justify-between border-[3px] border-b-[#e6f03c] border-l-[#2fdc50] border-r-[#e6f03c] border-t-[#9be83c] bg-black pb-[2px] pl-px text-[9px] font-bold leading-[10px]">PC<span className="h-px w-[6px] bg-white" /></span></TaskButton>
      <div className="flex flex-1 items-center justify-end">
        <button aria-label="Show hidden icons" className="w-6"><Svg w={12} h={8}><path d="M1 6.500L6 1.500l5 5" stroke="#fff" strokeWidth="1.300" /></Svg></button>
        <span className="mr-2 flex h-4 w-4 items-center justify-center bg-[#c3d8f6] text-[13px] font-bold leading-none text-[#3d4fa8]">E</span>
        <Svg w={14} h={17} className="mr-[10px]"><path d="M3 2.500C5 .500 9 .500 11 2.500M3 14.500c2 2 6 2 8 0M1.500 5.500h8v6h-8zM10 7.500l2.500-1v4l-2.500-1" stroke="#fff" strokeWidth="1.200" /></Svg>
        <Svg w={17} h={15} className="mr-2"><path d="M5 2.500h11.500v8H3v-4M10 10.500v3M6 14h8M.5.500h4v4h-4zM2.500 5v3" stroke="#fff" /></Svg>
        <Svg w={17} h={13} className="mr-[10px]"><path d="M.5 4.500h2L6 1v11L2.500 8.500h-2zM8 5c1 1 1 2 0 3M10 3c2 2 2 5 0 7" stroke="#fff" /><path d="M12.500 1.500c3 3 3 7 0 10" stroke="#8b95a3" /></Svg>
        <span className="text-[12px]">ENG</span>
        <time className="ml-3 flex w-[60px] flex-col items-center text-[11px] leading-[18px]"><span>9:56 SA</span><span>15/01/2022</span></time>
        <button aria-label="Notifications" className="relative ml-4 mr-[10px]">
          <Svg w={26} h={24}><path d="M1 1h16v13H9l-4 4v-4H1z" fill="#fff" /><path d="M4 4.500h10M4 7.500h10M4 10.500h7" stroke="#1f2f45" /></Svg>
          <span className="absolute bottom-0 right-0 flex h-4 w-4 items-center justify-center rounded-full border border-[#999] bg-[#2b3036] text-[11px] leading-none">1</span>
        </button>
        <span className="h-10 w-px bg-[#55606f]" /><span className="w-1" />
      </div>
    </footer>
  );
}

export default function App() {
  return (
    <div className="flex h-screen flex-col overflow-hidden bg-[#0098ee]">
      <div className="flex min-h-0 flex-1 gap-[38px] border-r-2 border-[#1c3f80] bg-gradient-to-b from-[#0087de] via-[#009ff2] to-[#00b0fa] pl-2">
        <WordWindow />
        <BrowserWindow />
      </div>
      <Taskbar />
    </div>
  );
}
